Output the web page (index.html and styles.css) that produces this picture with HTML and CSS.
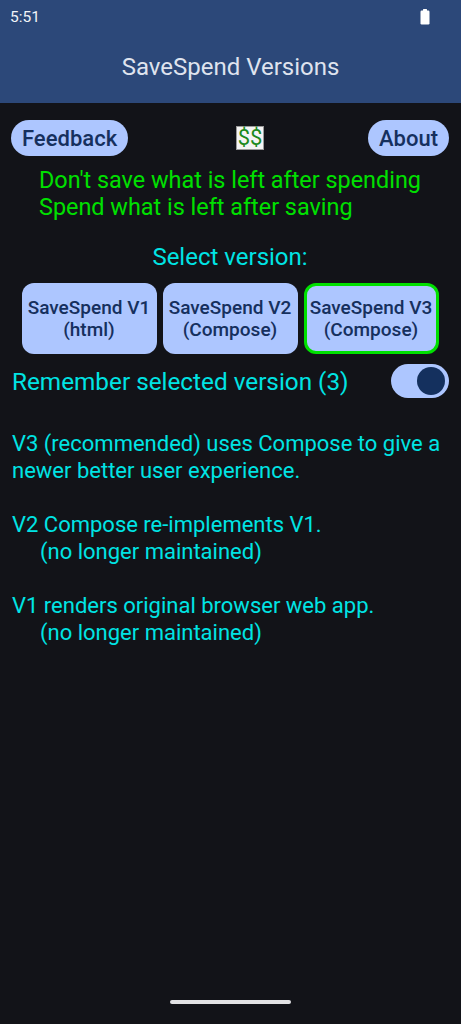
FILE: index.html
```html
<!DOCTYPE html>
<html>
<head>
<meta charset="utf-8">
<link rel="stylesheet" href="styles.css">
</head>
<body>
<div class="screen">
  <header class="appbar">
    <div class="status">
      <span class="time">5:51</span>
      <svg class="battery" width="10" height="16" viewBox="0 0 10 16"><rect x="3" y="0" width="4" height="2" rx="0.5" fill="#fff"/><rect x="0.5" y="1.5" width="9" height="14" rx="1.2" fill="#fff"/></svg>
    </div>
    <div class="title">SaveSpend Versions</div>
  </header>
  <main class="content">
    <div class="toprow">
      <button class="pill">Feedback</button>
      <span class="logo">$$</span>
      <button class="pill">About</button>
    </div>
    <div class="motto-wrap">
      <div class="motto">Don't save what is left after spending<br>Spend what is left after saving</div>
    </div>
    <div class="select-label">Select version:</div>
    <div class="versions">
      <button class="ver">SaveSpend V1<br>(html)</button>
      <button class="ver">SaveSpend V2<br>(Compose)</button>
      <button class="ver selected">SaveSpend V3<br>(Compose)</button>
    </div>
    <div class="remember">
      <span>Remember selected version (3)</span>
      <span class="switch"><span class="thumb"></span></span>
    </div>
    <div class="info">
      <p>V3 (recommended) uses Compose to give a newer better user experience.</p>
      <p>V2 Compose re-implements V1.<br><span class="indent">(no longer maintained)</span></p>
      <p>V1 renders original browser web app.<br><span class="indent">(no longer maintained)</span></p>
    </div>
  </main>
  <div class="navbar"><span class="handle"></span></div>
</div>
</body>
</html>
```
FILE: styles.css
```css
html, body {
  margin: 0;
  padding: 0;
  background: #121318;
}
body {
  font-family: Roboto, "Noto Sans", "Liberation Sans", sans-serif;
}
.screen {
  width: 461px;
  height: 1024px;
  display: flex;
  flex-direction: column;
  background: #121318;
}
.appbar {
  background: #2c4879;
  height: 103px;
  display: flex;
  flex-direction: column;
}
.status {
  height: 34px;
  display: flex;
  align-items: center;
  justify-content: space-between;
  padding: 0 31px 0 10px;
  color: #f2f4f8;
  font-size: 15.5px;
}
.battery {
  display: block;
}
.title {
  flex: 1;
  display: flex;
  align-items: center;
  justify-content: center;
  color: #dfe3ee;
  font-size: 24px;
  padding-bottom: 3px;
}
.content {
  flex: 1;
  display: flex;
  flex-direction: column;
  padding: 17px 12px 0 11px;
}
.toprow {
  display: flex;
  align-items: center;
  justify-content: space-between;
}
.pill {
  background: #adc6ff;
  color: #16305e;
  border: none;
  border-radius: 18px;
  height: 36px;
  padding: 0 11px;
  font-family: "Roboto Medium", Roboto, sans-serif;
  font-size: 22px;
  font-weight: 500;
}
.logo {
  background: #f4f4f4;
  border: 1px solid #9a9a9a;
  color: #1c8a1c;
  font-size: 22px;
  line-height: 22px;
  padding: 0 1px;
  margin-left: 4px;
}
.motto-wrap {
  display: flex;
  justify-content: center;
  margin-top: 11px;
}
.motto {
  color: #00e000;
  font-size: 23.4px;
  line-height: 27px;
}
.select-label {
  text-align: center;
  color: #00e4e4;
  font-size: 24px;
  line-height: 28px;
  margin-top: 22px;
}
.versions {
  display: flex;
  justify-content: center;
  gap: 6px;
  margin-top: 12px;
}
.ver {
  width: 135px;
  height: 71px;
  background: #adc6ff;
  color: #16305e;
  border: 3px solid transparent;
  border-radius: 12px;
  font-family: "Roboto Medium", Roboto, sans-serif;
  font-size: 19px;
  font-weight: 500;
  line-height: 22px;
  padding: 0;
}
.ver.selected {
  border-color: #00e000;
}
.remember {
  display: flex;
  align-items: center;
  justify-content: space-between;
  color: #00e4e4;
  font-size: 24.3px;
  margin-top: 10px;
  margin-left: 1px;
}
.switch {
  width: 58px;
  height: 34px;
  border-radius: 17px;
  background: #adc6ff;
  display: flex;
  align-items: center;
  justify-content: flex-end;
  padding-right: 4px;
  box-sizing: border-box;
}
.thumb {
  width: 28px;
  height: 28px;
  border-radius: 50%;
  background: #14305e;
}
.info {
  color: #00e4e4;
  font-size: 22px;
  line-height: 27px;
  margin-top: 32px;
  margin-left: 1px;
}
.info p {
  margin: 0 0 27px 0;
}
.indent {
  padding-left: 28px;
}
.navbar {
  height: 28px;
  display: flex;
  justify-content: center;
  align-items: flex-start;
}
.handle {
  width: 121px;
  height: 4px;
  border-radius: 2px;
  background: #e2e2e4;
  margin-top: 4px;
}
```
